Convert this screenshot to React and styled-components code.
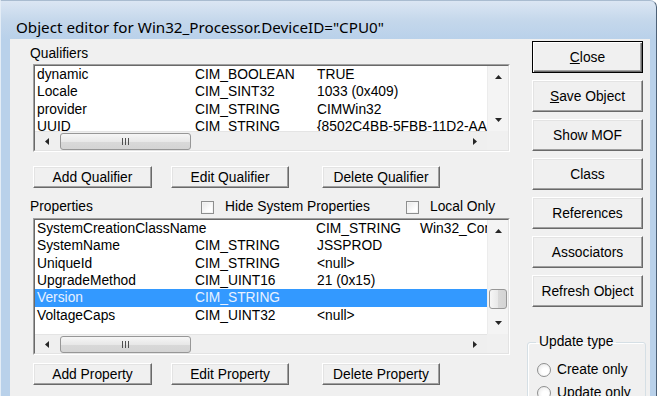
import React from "react";
import styled, { createGlobalStyle } from "styled-components";

const GlobalStyle = createGlobalStyle`
  html, body { margin: 0; padding: 0; background: #fff; }
  body { font-family: "Liberation Sans", Arial, sans-serif; color: #000; }
`;

const qualifiers = [
  ["dynamic", "CIM_BOOLEAN", "TRUE"],
  ["Locale", "CIM_SINT32", "1033 (0x409)"],
  ["provider", "CIM_STRING", "CIMWin32"],
  ["UUID", "CIM_STRING", "{8502C4BB-5FBB-11D2-AAC1-006008C78BC7}"],
];

const properties = [
  ["SystemCreationClassName", "CIM_STRING", "Win32_ComputerSystem", "wide"],
  ["SystemName", "CIM_STRING", "JSSPROD"],
  ["UniqueId", "CIM_STRING", "<null>"],
  ["UpgradeMethod", "CIM_UINT16", "21 (0x15)"],
  ["Version", "CIM_STRING", "", "selected"],
  ["VoltageCaps", "CIM_UINT32", "<null>"],
];

const Window = styled.div`
  width: 657px;
  height: 396px;
  box-sizing: border-box;
  display: flex;
  flex-direction: column;
  padding: 0 6px 0 9px;
  border-left: 1px solid #e4edf6;
  border-top: 1px solid #a9bcd0;
  border-right: 1px solid #4d6177;
  border-top-right-radius: 7px;
  background: linear-gradient(to bottom, #dbe6f3 0px, #c4d7eb 20px, #b9d1ea 38px, #b9d1ea 100%);
  overflow: hidden;
`;

const TitleBar = styled.div`
  flex: none;
  height: 38px;
  box-sizing: border-box;
  padding: 17px 0 0 6px;
  font-family: "Noto Sans", "Open Sans", sans-serif;
  font-size: 15.2px;
  line-height: 18px;
  color: #000;
  white-space: nowrap;
`;

const Client = styled.div`
  flex: 1;
  min-height: 0;
  display: flex;
  background: #f0f0f0;
  font-size: 13.8px;
  overflow: hidden;
`;

const LeftPane = styled.div`
  flex: none;
  width: 517px;
  box-sizing: border-box;
  padding: 7px 0 0 20px;
  display: flex;
  flex-direction: column;
`;

const Label = styled.div`
  flex: none;
  line-height: 16px;
  height: 16px;
`;

const HeaderRow = styled.div`
  flex: none;
  display: grid;
  grid-template-columns: 171px 205px auto;
  align-items: center;
  height: 18px;
  margin-top: 10px;
`;

const Check = styled.label`
  display: flex;
  align-items: center;
  gap: 11px;
  line-height: 16px;
`;

const CheckBox = styled.span`
  width: 13px;
  height: 13px;
  box-sizing: border-box;
  border: 1px solid #8e8f8f;
  background: linear-gradient(135deg, #e6e6e6 0%, #ffffff 70%);
  box-shadow: inset 0 0 0 1px #f4f4f4;
`;

const ListFrame = styled.div`
  flex: none;
  width: 477px;
  height: ${(p) => p.$h}px;
  box-sizing: border-box;
  margin: ${(p) => p.$mt}px 0 0 3px;
  border: 1px solid;
  border-color: #a0a0a0 #ffffff #ffffff #a0a0a0;
`;

const ListInner = styled.div`
  height: 100%;
  box-sizing: border-box;
  border: 1px solid;
  border-color: #696969 #e3e3e3 #e3e3e3 #696969;
  display: grid;
  grid-template-columns: 1fr 21px;
  grid-template-rows: 1fr 19px;
`;

const ListContent = styled.div`
  background: #fff;
  overflow: hidden;
  min-height: 0;
`;

const Row = styled.div`
  display: grid;
  grid-template-columns: ${(p) => (p.$wide ? "279px 104px" : "158px 122px")} auto;
  height: 17.35px;
  line-height: 18.5px;
  padding-left: 2px;
  white-space: nowrap;
  background: ${(p) => (p.$selected ? "#3399ff" : "transparent")};
  color: ${(p) => (p.$selected ? "#e8f1ff" : "#000")};
`;

const VScroll = styled.div`
  display: flex;
  flex-direction: column;
  min-height: 0;
  background: #f4f4f4;
  border-left: 1px solid #ececec;
`;

const HScroll = styled.div`
  display: flex;
  background: #efefef;
  border-top: 1px solid #e4e4e4;
`;

const Corner = styled.div`
  background: #f0f0f0;
`;

const ArrowBox = styled.div`
  flex: none;
  display: flex;
  align-items: center;
  justify-content: center;
  width: ${(p) => (p.$h ? "24px" : "auto")};
  height: ${(p) => (p.$h ? "auto" : "22px")};
`;

const Track = styled.div`
  flex: 1;
  min-height: 0;
  display: flex;
  flex-direction: ${(p) => (p.$h ? "row" : "column")};
  align-items: center;
`;

const Thumb = styled.div`
  flex: none;
  box-sizing: border-box;
  display: flex;
  align-items: center;
  justify-content: center;
  border: 1px solid #979797;
  border-radius: 3px;
  background: ${(p) =>
    p.$h
      ? "linear-gradient(to bottom, #f6f6f6, #e8e8e8 50%, #d9d9d9 51%, #d4d4d4)"
      : "linear-gradient(to right, #f6f6f6, #e8e8e8 50%, #d9d9d9 51%, #d4d4d4)"};
  ${(p) =>
    p.$h
      ? `width: 131px; height: 17px; margin-left: 1px;`
      : `width: 18px; height: 20px; margin-top: auto; margin-bottom: 3px;`}
`;

const Grip = styled.span`
  width: 7px;
  height: 7px;
  background: repeating-linear-gradient(to right, #505050 0 1px, transparent 1px 3px);
`;

const ButtonRow = styled.div`
  flex: none;
  display: flex;
  gap: 19px;
  margin: ${(p) => p.$mt}px 0 0 3px;
  & > :last-child {
    margin-left: 14px;
  }
`;

const Button = styled.button`
  flex: none;
  width: ${(p) => p.$w || 118}px;
  height: ${(p) => p.$hgt || 22}px;
  box-sizing: border-box;
  padding: 0;
  font-family: "Liberation Sans", Arial, sans-serif;
  font-size: 13.8px;
  color: #000;
  background: #f0f0f0;
  border: 1px solid;
  border-color: ${(p) => (p.$default ? "#000" : "#fff #696969 #696969 #fff")};
  box-shadow: ${(p) =>
    p.$default
      ? "inset 1px 1px 0 #fff, inset -1px -1px 0 #696969, inset -2px -2px 0 #a0a0a0"
      : "inset -1px -1px 0 #a0a0a0, inset 1px 1px 0 #e3e3e3"};
  cursor: default;
`;

const RightPane = styled.div`
  flex: none;
  width: 123px;
  box-sizing: border-box;
  padding-top: 2px;
  display: flex;
  flex-direction: column;
  gap: 7px;
  & > button {
    margin-left: 5px;
  }
`;

const GroupBox = styled.fieldset`
  flex: none;
  margin: 20px 0 0 0;
  width: 119px;
  box-sizing: border-box;
  padding: 0 8px;
  border: 1px solid #d5dfe5;
  border-radius: 3px;
  box-shadow: inset 1px 1px 0 #fff;
`;

const Legend = styled.legend`
  padding: 0 3px;
  line-height: 16px;
`;

const Radio = styled.label`
  display: flex;
  align-items: center;
  gap: 6px;
  height: 17px;
  line-height: 17px;
  margin-top: ${(p) => p.$mt}px;
  margin-left: 1px;
  white-space: nowrap;
`;

const RadioDot = styled.span`
  width: 14px;
  height: 14px;
  box-sizing: border-box;
  border-radius: 50%;
  border: 1px solid #8e8f8f;
  background: radial-gradient(circle at 60% 60%, #ffffff 30%, #e2e2e2 100%);
`;

const Arrow = ({ dir }) => {
  const pts = {
    up: "0,4 3.5,0 7,4",
    down: "0,0 3.5,4 7,0",
    left: "4,0 0,3.5 4,7",
    right: "0,0 4,3.5 0,7",
  }[dir];
  const vert = dir === "up" || dir === "down";
  return (
    <svg width={vert ? 7 : 4} height={vert ? 4 : 7} viewBox={vert ? "0 0 7 4" : "0 0 4 7"}>
      <polygon points={pts} fill="#262626" />
    </svg>
  );
};

const List = ({ rows, height, mt, thumb }) => (
  <ListFrame $h={height} $mt={mt}>
    <ListInner>
      <ListContent>
        {rows.map(([name, type, value, flag]) => (
          <Row key={name} $wide={flag === "wide"} $selected={flag === "selected"}>
            <span>{name}</span>
            <span>{type}</span>
            <span>{value}</span>
          </Row>
        ))}
      </ListContent>
      <VScroll>
        <ArrowBox><Arrow dir="up" /></ArrowBox>
        <Track>{thumb && <Thumb />}</Track>
        <ArrowBox><Arrow dir="down" /></ArrowBox>
      </VScroll>
      <HScroll>
        <ArrowBox $h><Arrow dir="left" /></ArrowBox>
        <Track $h>
          <Thumb $h><Grip /></Thumb>
        </Track>
        <ArrowBox $h><Arrow dir="right" /></ArrowBox>
      </HScroll>
      <Corner />
    </ListInner>
  </ListFrame>
);

const sideButtons = [
  [<><u>C</u>lose</>, true],
  [<><u>S</u>ave Object</>],
  ["Show MOF"],
  ["Class"],
  ["References"],
  ["Associators"],
  ["Refresh Object"],
];

export default function App() {
  return (
    <>
      <GlobalStyle />
      <Window>
        <TitleBar>Object editor for Win32_Processor.DeviceID="CPU0"</TitleBar>
        <Client>
          <LeftPane>
            <Label>Qualifiers</Label>
            <List rows={qualifiers} height={88} mt={2} />
            <ButtonRow $mt={14}>
              <Button $w={119}>Add Qualifier</Button>
              <Button>Edit Qualifier</Button>
              <Button>Delete Qualifier</Button>
            </ButtonRow>
            <HeaderRow>
              <Label>Properties</Label>
              <Check><CheckBox />Hide System Properties</Check>
              <Check><CheckBox />Local Only</Check>
            </HeaderRow>
            <List rows={properties} height={137} mt={2} thumb />
            <ButtonRow $mt={8}>
              <Button $w={119}>Add Property</Button>
              <Button>Edit Property</Button>
              <Button>Delete Property</Button>
            </ButtonRow>
          </LeftPane>
          <RightPane>
            {sideButtons.map(([label, def], i) => (
              <Button key={i} $w={111} $hgt={32} $default={def}>{label}</Button>
            ))}
            <GroupBox>
              <Legend>Update type</Legend>
              <Radio $mt={11}><RadioDot />Create only</Radio>
              <Radio $mt={6}><RadioDot />Update only</Radio>
            </GroupBox>
          </RightPane>
        </Client>
      </Window>
    </>
  );
}
